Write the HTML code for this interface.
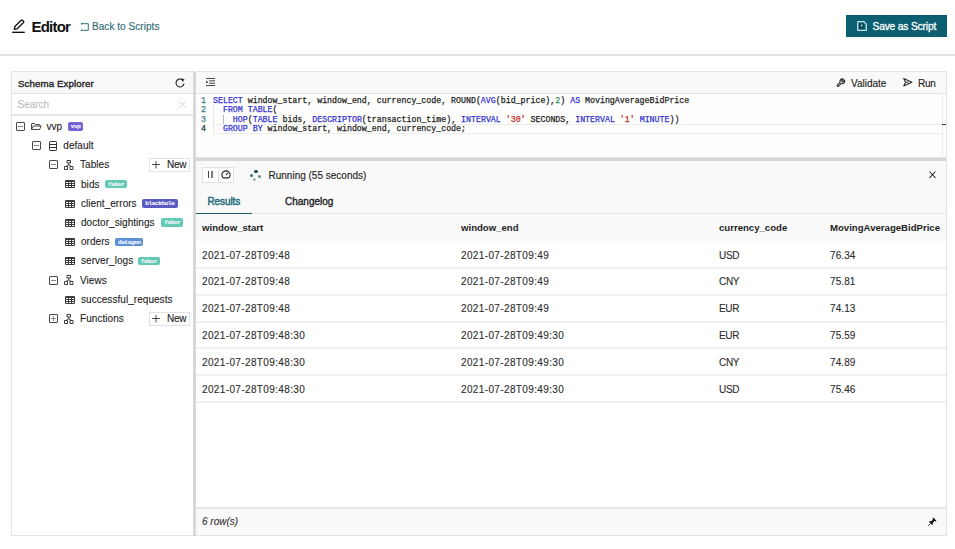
<!DOCTYPE html>
<html><head><meta charset="utf-8">
<style>
*{box-sizing:border-box;margin:0;padding:0}
html,body{width:955px;height:549px;overflow:hidden;background:#fff;font-family:"Liberation Sans",sans-serif;color:#222}
.a{position:absolute}
.t{position:absolute;white-space:nowrap;line-height:1;-webkit-text-stroke:0.12px currentColor}
svg{position:absolute;overflow:visible}
#hdrline{left:0;top:54px;width:955px;height:2px;background:#e4e4e4}
#save{left:846px;top:15px;width:101px;height:22px;background:#0c5e71}
#left{left:11px;top:71px;width:183px;height:465px;border:1px solid #e3e3e3;border-right:none;background:#fff}
#lhead{left:11px;top:71px;width:182px;height:23px;background:#f9f9f9;border-top:1px solid #e3e3e3;border-left:1px solid #e3e3e3;border-bottom:1px solid #e3e3e3}
#search{left:12px;top:114px;width:181px;height:2px;background:#e6e6e6}
#vsplit{left:193px;top:72px;width:3px;height:464px;background:#d8d8d8}
#right{left:196px;top:71px;width:751px;height:465px;border:1px solid #e3e3e3;border-left:none;background:#fff}
#rtool{left:196px;top:71px;width:751px;height:23px;background:#f9f9f9;border-top:1px solid #e3e3e3;border-right:1px solid #e3e3e3;border-bottom:1px solid #e3e3e3}
#editor{left:196px;top:94px;width:750px;height:64px;background:#fefefd}
#hsplit{left:196px;top:157px;width:750px;height:4px;background:#d6d6d6;border-top:1px solid #e4e4e4}
#rbar{left:196px;top:161px;width:750px;height:53px;background:#f9f9f9}
#tabline{left:196px;top:213px;width:750px;height:2px;background:#e8e8e8}
#thead{left:196px;top:214px;width:750px;height:27px;background:#f9f9f9}
#footer{left:196px;top:507px;width:750px;height:28px;background:#f9f9f9;border-top:2px solid #e8e8e8}
.code{position:absolute;left:213px;font-family:"Liberation Mono",monospace;font-size:8.27px;line-height:9.6px;white-space:pre;color:#1e1e1e;-webkit-text-stroke:0.25px currentColor}
.ln{position:absolute;left:201px;font-family:"Liberation Mono",monospace;font-size:8.27px;line-height:9.6px;color:#3f7f8a;-webkit-text-stroke:0.25px currentColor}
.kw{color:#3535d2}
.str{color:#c8282c}
.num{color:#2f8f6a}
.tr{font-size:10px;color:#222;-webkit-text-stroke:0.1px #222 !important;letter-spacing:0.05px}
.badge{position:absolute;height:8.5px;border-radius:2px;color:#f4f4ff;font-family:"Liberation Mono",monospace;font-weight:bold;font-size:6px;line-height:9.3px;letter-spacing:-0.32px;text-indent:0.3px;text-align:center;-webkit-text-stroke:0.15px #f4f4ff;overflow:hidden}
.th{font-size:9.6px;font-weight:bold;color:#1e1e1e;-webkit-text-stroke:0 !important}
.td{font-size:10px;color:#2e2e2e;letter-spacing:0.37px}
.rl{position:absolute;left:196px;width:750px;height:2px;background:#f1f1f1}
.box{position:absolute;width:9px;height:9px;border:1px solid #555;background:#fff}
.box:after{content:"";position:absolute;left:1.5px;top:3px;width:4px;height:1px;background:#555}
</style></head><body>
<!-- header -->
<svg style="left:8px;top:14px" width="24" height="24" viewBox="0 0 24 24"><path d="M6.3 15.4 L6.9 12.5 L13.2 6.2 Q13.8 5.6 14.4 6.2 L15.5 7.3 Q16.1 7.9 15.5 8.5 L9.2 14.8 Z" fill="none" stroke="#111" stroke-width="1.3" stroke-linejoin="round"/><path d="M4.1 18.3 H16.8" stroke="#111" stroke-width="1.35"/></svg>
<div class="t" style="left:31.5px;top:19px;font-size:15px;font-weight:bold;color:#111;letter-spacing:-0.8px;-webkit-text-stroke:0">Editor</div>
<svg style="left:81px;top:22.5px" width="8" height="8" viewBox="0 0 8 8"><path d="M0.5 0.7 H7.3 V7.3 H0.5 M0.5 0 V1.5 M0.5 6.5 V8" fill="none" stroke="#2a6e7e" stroke-width="1"/></svg>
<div class="t" style="left:92px;top:22px;font-size:10px;color:#2b6a78;letter-spacing:0.05px">Back to Scripts</div>
<div id="save" class="a"></div>
<svg style="left:857.3px;top:21px" width="10" height="10" viewBox="0 0 10 10"><path d="M0.7 0.7 H6.9 L9.3 3.1 V9.3 H0.7 Z" fill="none" stroke="#bfe3ea" stroke-width="1.3" stroke-linejoin="round"/><path d="M2.6 2.4 V6.6 H6.4 V2.4" fill="none" stroke="#0a3f4c" stroke-width="1.2"/><rect x="4" y="3.6" width="1.4" height="2" fill="#9cc6cf"/></svg>
<div class="t" style="left:872.5px;top:22px;font-size:10.2px;color:#fff;letter-spacing:-0.15px;-webkit-text-stroke:0.3px #fff">Save as Script</div>
<div id="hdrline" class="a"></div>

<!-- left panel -->
<div id="left" class="a"></div>
<div id="lhead" class="a"></div>
<div class="t" style="left:18px;top:79px;font-size:9.7px;color:#222;letter-spacing:0.1px;-webkit-text-stroke:0.35px #222">Schema Explorer</div>
<svg style="left:174.7px;top:77.8px" width="10" height="10" viewBox="0 0 10 10"><path d="M7.2 1.6 A4 4 0 1 0 9 5.6" fill="none" stroke="#222" stroke-width="1.15"/><path d="M6.3 0.2 L9.6 1.5 L7.4 4.1 Z" fill="#222"/></svg>
<div class="t" style="left:17.5px;top:99.5px;font-size:10px;color:#bdbdbd">Search</div>
<svg style="left:179px;top:101px" width="7" height="7" viewBox="0 0 7 7"><path d="M0.5 0.5 L6.5 6.5 M6.5 0.5 L0.5 6.5" stroke="#c8c8c8" stroke-width="0.9"/></svg>
<div id="search" class="a"></div>

<div id="vsplit" class="a"></div>

<!-- right panel -->
<div id="right" class="a"></div>
<div id="rtool" class="a"></div>
<svg style="left:205.5px;top:78px" width="9" height="8" viewBox="0 0 9 8"><path d="M0 0.5 H9 M3.2 2.8 H9 M3.2 5.2 H9 M0 7.5 H9" stroke="#333" stroke-width="0.9"/><path d="M0.2 2.4 L2.2 4 L0.2 5.6 Z" fill="#333"/></svg>
<svg style="left:835.5px;top:78px" width="9.5" height="9.5" viewBox="0 0 24 24"><path d="M14.7 6.3a1 1 0 0 0 0 1.4l1.6 1.6a1 1 0 0 0 1.4 0l3.77-3.77a6 6 0 0 1-7.94 7.94l-6.91 6.91a2.12 2.12 0 0 1-3-3l6.91-6.91a6 6 0 0 1 7.94-7.94l-3.76 3.76z" fill="none" stroke="#2a2a2a" stroke-width="2.9" stroke-linejoin="round"/></svg>
<div class="t" style="left:851px;top:78.5px;font-size:10px;color:#222">Validate</div>
<svg style="left:902.5px;top:78.3px" width="9.5" height="8.5" viewBox="0 0 9.5 8.5"><path d="M0.7 0.6 L8.9 4.25 L0.7 7.9 L2.6 4.25 Z M2.6 4.25 H5.5" fill="none" stroke="#2a2a2a" stroke-width="1.1" stroke-linejoin="round"/></svg>
<div class="t" style="left:918px;top:78.5px;font-size:10px;color:#222;letter-spacing:-0.3px">Run</div>

<div id="editor" class="a"></div>
<!-- current line highlight -->
<div class="a" style="left:213px;top:124px;width:729px;height:10px;border-top:1px solid #ededed;border-bottom:1px solid #ededed"></div>
<div class="a" style="left:942px;top:94px;width:1px;height:64px;background:#eeeeea"></div>
<div class="a" style="left:942px;top:123.6px;width:4px;height:1.6px;background:#333"></div>
<div class="a" style="left:213px;top:105px;width:1px;height:29px;background:#e8e8e8"></div>
<div class="a" style="left:223px;top:115px;width:1px;height:9px;background:#b8b8b8"></div>
<div class="ln" style="top:95.7px">1<br>2<br>3<br><span style="color:#23343a">4</span></div>
<div class="code" style="top:95.7px"><span class="kw">SELECT</span> window_start, window_end, currency_code, ROUND(<span class="kw">AVG</span>(bid_price),<span class="num">2</span>) <span class="kw">AS</span> MovingAverageBidPrice
  <span class="kw">FROM</span> <span class="kw">TABLE</span>(
    <span class="kw">HOP</span>(<span class="kw">TABLE</span> bids, <span class="kw">DESCRIPTOR</span>(transaction_time), <span class="kw">INTERVAL</span> <span class="str">'30'</span> SECONDS, <span class="kw">INTERVAL</span> <span class="str">'1'</span> <span class="kw">MINUTE</span>))
  <span class="kw">GROUP</span> <span class="kw">BY</span> window_start, window_end, currency_code;</div>

<div id="hsplit" class="a"></div>
<div id="rbar" class="a"></div>
<!-- button group -->
<div class="a" style="left:202px;top:166.5px;width:32px;height:16px;background:#fff;border:1px solid #e2e2e2"></div>
<div class="a" style="left:218px;top:167px;width:1px;height:15px;background:#e2e2e2"></div>
<div class="a" style="left:207.7px;top:170.8px;width:1.3px;height:7.3px;background:#444"></div>
<div class="a" style="left:211.3px;top:170.8px;width:1.3px;height:7.3px;background:#777"></div>
<svg style="left:221px;top:170.3px" width="10" height="9" viewBox="0 0 10 9"><path d="M2.2 7.9 A4.1 4.1 0 1 1 7.8 7.9 Z" fill="none" stroke="#2a2a2a" stroke-width="1.15"/><path d="M5 4.9 L7 2.9" stroke="#2a2a2a" stroke-width="1.1"/><path d="M5 0.6 V1.6" stroke="#333" stroke-width="0.9"/></svg>
<!-- spinner -->
<div class="a" style="left:254.4px;top:170.3px;width:3.2px;height:3.2px;border-radius:50%;background:#1f4a50"></div>
<div class="a" style="left:249.9px;top:173.8px;width:3.2px;height:3.2px;border-radius:50%;background:#3e6a70"></div>
<div class="a" style="left:257.7px;top:174.6px;width:3.2px;height:3.2px;border-radius:50%;background:#6a8a8e"></div>
<div class="a" style="left:253.2px;top:178.2px;width:3.2px;height:3.2px;border-radius:50%;background:#a0b4b6"></div>
<div class="t" style="left:268.5px;top:171px;font-size:10px;color:#222">Running (55 seconds)</div>
<svg style="left:929px;top:170.7px" width="7" height="7.3" viewBox="0 0 7 7.3"><path d="M0.5 0.5 L6.5 6.8 M6.5 0.5 L0.5 6.8" stroke="#2a2a2a" stroke-width="1.05"/></svg>
<!-- tabs -->
<div class="t" style="left:207.5px;top:196.5px;font-size:10px;color:#246b7c;letter-spacing:-0.1px;-webkit-text-stroke:0.45px #246b7c">Results</div>
<div class="t" style="left:285px;top:196.5px;font-size:10px;color:#222;letter-spacing:0px;-webkit-text-stroke:0.35px #222">Changelog</div>
<div id="tabline" class="a"></div>
<div class="a" style="left:196px;top:212.5px;width:56px;height:2px;background:#1d5f70"></div>

<!-- table -->
<div id="thead" class="a"></div>
<div class="t th" style="left:202px;top:223px">window_start</div>
<div class="t th" style="left:461px;top:223px">window_end</div>
<div class="t th" style="left:719px;top:223px">currency_code</div>
<div class="t th" style="left:830px;top:223px">MovingAverageBidPrice</div>

<div class="t td" style="left:202px;top:251px">2021-07-28T09:48</div>
<div class="t td" style="left:461px;top:251px">2021-07-28T09:49</div>
<div class="t td" style="left:719px;top:251px;letter-spacing:-0.3px">USD</div>
<div class="t td" style="left:830px;top:251px;letter-spacing:0.1px">76.34</div>
<div class="rl" style="top:267.0px"></div>
<div class="t td" style="left:202px;top:277px">2021-07-28T09:48</div>
<div class="t td" style="left:461px;top:277px">2021-07-28T09:49</div>
<div class="t td" style="left:719px;top:277px;letter-spacing:-0.3px">CNY</div>
<div class="t td" style="left:830px;top:277px;letter-spacing:0.1px">75.81</div>
<div class="rl" style="top:293.8px"></div>
<div class="t td" style="left:202px;top:304px">2021-07-28T09:48</div>
<div class="t td" style="left:461px;top:304px">2021-07-28T09:49</div>
<div class="t td" style="left:719px;top:304px;letter-spacing:-0.3px">EUR</div>
<div class="t td" style="left:830px;top:304px;letter-spacing:0.1px">74.13</div>
<div class="rl" style="top:320.6px"></div>
<div class="t td" style="left:202px;top:331px">2021-07-28T09:48:30</div>
<div class="t td" style="left:461px;top:331px">2021-07-28T09:49:30</div>
<div class="t td" style="left:719px;top:331px;letter-spacing:-0.3px">EUR</div>
<div class="t td" style="left:830px;top:331px;letter-spacing:0.1px">75.59</div>
<div class="rl" style="top:347.4px"></div>
<div class="t td" style="left:202px;top:358px">2021-07-28T09:48:30</div>
<div class="t td" style="left:461px;top:358px">2021-07-28T09:49:30</div>
<div class="t td" style="left:719px;top:358px;letter-spacing:-0.3px">CNY</div>
<div class="t td" style="left:830px;top:358px;letter-spacing:0.1px">74.89</div>
<div class="rl" style="top:374.2px"></div>
<div class="t td" style="left:202px;top:385px">2021-07-28T09:48:30</div>
<div class="t td" style="left:461px;top:385px">2021-07-28T09:49:30</div>
<div class="t td" style="left:719px;top:385px;letter-spacing:-0.3px">USD</div>
<div class="t td" style="left:830px;top:385px;letter-spacing:0.1px">75.46</div>
<div class="rl" style="top:401.0px"></div>

<div id="footer" class="a"></div>
<div class="t" style="left:202px;top:517px;font-size:10px;font-style:italic;color:#333">6 row(s)</div>
<svg style="left:928px;top:517px" width="9" height="9" viewBox="0 0 9 9"><path d="M5.2 0.5 L8.5 3.8 L7.6 4.4 L6.4 4.1 L4.8 5.7 L4.9 7.2 L4.2 7.9 L1.1 4.8 L1.8 4.1 L3.3 4.2 L4.9 2.6 L4.6 1.4 Z" fill="#111"/><path d="M2.6 6.4 L0.4 8.6" stroke="#111" stroke-width="1"/></svg>

<!-- tree -->
<div class="a" style="left:16px;top:122px;width:9px;height:9px;border:1px solid #4a4a4a;border-radius:1px;background:#fff"></div>
<div class="a" style="left:18px;top:126px;width:5px;height:1px;background:#888"></div>
<svg style="left:31px;top:123.20px" width="11" height="7" viewBox="0 0 11 7"><path d="M0.5 6.5 V1 Q0.5 0.5 1 0.5 H3.6 L4.6 1.6 H8.4 Q8.9 1.6 8.9 2.1 V3 M0.5 6.5 L2.2 3 H10.2 L8.6 6.5 Z" fill="none" stroke="#333" stroke-width="0.9" stroke-linejoin="round"/></svg>
<div class="t tr" style="left:46.5px;top:122px">vvp</div>
<div class="badge" style="left:67.7px;top:122.30px;width:15.6px;background:#7462d6">vvp</div>
<div class="a" style="left:32px;top:141px;width:9px;height:9px;border:1px solid #4a4a4a;border-radius:1px;background:#fff"></div>
<div class="a" style="left:34px;top:145px;width:5px;height:1px;background:#888"></div>
<svg style="left:49px;top:141px" width="8" height="10" viewBox="0 0 8 10"><path d="M1.2 0.5 H6.8 Q7.5 0.5 7.5 1.2 V8.8 Q7.5 9.5 6.8 9.5 H1.2 Q0.5 9.5 0.5 8.8 V1.2 Q0.5 0.5 1.2 0.5 Z M0.5 3.5 H7.5 M0.5 6.5 H7.5" fill="none" stroke="#333" stroke-width="1"/></svg>
<div class="t tr" style="left:63.3px;top:141px">default</div>
<div class="a" style="left:49px;top:160px;width:9px;height:9px;border:1px solid #4a4a4a;border-radius:1px;background:#fff"></div>
<div class="a" style="left:51px;top:164px;width:5px;height:1px;background:#888"></div>
<svg style="left:64px;top:160px" width="10" height="10" viewBox="0 0 10 10"><path d="M3 0.5 H6.5 V3 H3 Z M0.5 6.5 H3.5 V9.5 H0.5 Z M6 6.5 H9 V9.5 H6 Z M4.75 3 V4.8 L2 6.5 M4.75 4.8 L7.5 6.5" fill="none" stroke="#333" stroke-width="0.95"/></svg>
<div class="t tr" style="left:80px;top:160px">Tables</div>
<div class="a" style="left:148.5px;top:158.30px;width:41.5px;height:13.8px;border:1px solid #e3e3e3;background:#fff"></div>
<svg style="left:152px;top:161.30px" width="8" height="8" viewBox="0 0 8 8"><path d="M4 0 V7.5 M0 3.5 H8" stroke="#222" stroke-width="0.8"/></svg>
<div class="t tr" style="left:167px;top:160px;letter-spacing:-0.3px">New</div>
<svg style="left:65px;top:180px" width="10" height="8" viewBox="0 0 10 8"><path d="M0.5 0.5 H9.5 V7.5 H0.5 Z M0.5 1.5 H9.5 M0.5 3.5 H9.5 M0.5 5.5 H9.5 M3.5 0.5 V7.5 M6.5 0.5 V7.5" fill="none" stroke="#333" stroke-width="0.95"/></svg>
<div class="t tr" style="left:81px;top:180px">bids</div>
<div class="badge" style="left:105.2px;top:179.90px;width:21.6px;background:#62c9b4">faker</div>
<svg style="left:65px;top:200px" width="10" height="8" viewBox="0 0 10 8"><path d="M0.5 0.5 H9.5 V7.5 H0.5 Z M0.5 1.5 H9.5 M0.5 3.5 H9.5 M0.5 5.5 H9.5 M3.5 0.5 V7.5 M6.5 0.5 V7.5" fill="none" stroke="#333" stroke-width="0.95"/></svg>
<div class="t tr" style="left:81px;top:199px">client_errors</div>
<div class="badge" style="left:142px;top:199.10px;width:35.5px;background:#5a5cc4">blackhole</div>
<svg style="left:65px;top:219px" width="10" height="8" viewBox="0 0 10 8"><path d="M0.5 0.5 H9.5 V7.5 H0.5 Z M0.5 1.5 H9.5 M0.5 3.5 H9.5 M0.5 5.5 H9.5 M3.5 0.5 V7.5 M6.5 0.5 V7.5" fill="none" stroke="#333" stroke-width="0.95"/></svg>
<div class="t tr" style="left:81px;top:218px">doctor_sightings</div>
<div class="badge" style="left:161.4px;top:218.30px;width:21.6px;background:#62c9b4">faker</div>
<svg style="left:65px;top:238px" width="10" height="8" viewBox="0 0 10 8"><path d="M0.5 0.5 H9.5 V7.5 H0.5 Z M0.5 1.5 H9.5 M0.5 3.5 H9.5 M0.5 5.5 H9.5 M3.5 0.5 V7.5 M6.5 0.5 V7.5" fill="none" stroke="#333" stroke-width="0.95"/></svg>
<div class="t tr" style="left:81px;top:237px">orders</div>
<div class="badge" style="left:115.2px;top:237.50px;width:28.1px;background:#5b90d4">datagen</div>
<svg style="left:65px;top:257px" width="10" height="8" viewBox="0 0 10 8"><path d="M0.5 0.5 H9.5 V7.5 H0.5 Z M0.5 1.5 H9.5 M0.5 3.5 H9.5 M0.5 5.5 H9.5 M3.5 0.5 V7.5 M6.5 0.5 V7.5" fill="none" stroke="#333" stroke-width="0.95"/></svg>
<div class="t tr" style="left:81px;top:256px">server_logs</div>
<div class="badge" style="left:138px;top:256.70px;width:21.7px;background:#62c9b4">faker</div>
<div class="a" style="left:49px;top:276px;width:9px;height:9px;border:1px solid #4a4a4a;border-radius:1px;background:#fff"></div>
<div class="a" style="left:51px;top:280px;width:5px;height:1px;background:#888"></div>
<svg style="left:64px;top:275px" width="10" height="10" viewBox="0 0 10 10"><path d="M3 0.5 H6.5 V3 H3 Z M0.5 6.5 H3.5 V9.5 H0.5 Z M6 6.5 H9 V9.5 H6 Z M4.75 3 V4.8 L2 6.5 M4.75 4.8 L7.5 6.5" fill="none" stroke="#333" stroke-width="0.95"/></svg>
<div class="t tr" style="left:80px;top:276px">Views</div>
<svg style="left:65px;top:296px" width="10" height="8" viewBox="0 0 10 8"><path d="M0.5 0.5 H9.5 V7.5 H0.5 Z M0.5 1.5 H9.5 M0.5 3.5 H9.5 M0.5 5.5 H9.5 M3.5 0.5 V7.5 M6.5 0.5 V7.5" fill="none" stroke="#333" stroke-width="0.95"/></svg>
<div class="t tr" style="left:81px;top:295px">successful_requests</div>
<div class="a" style="left:49px;top:314px;width:9px;height:9px;border:1px solid #4a4a4a;border-radius:1px;background:#fff"></div>
<div class="a" style="left:51px;top:318px;width:5px;height:1px;background:#888"></div>
<div class="a" style="left:53px;top:316px;width:1px;height:5px;background:#888"></div>
<svg style="left:64px;top:314px" width="10" height="10" viewBox="0 0 10 10"><path d="M3 0.5 H6.5 V3 H3 Z M0.5 6.5 H3.5 V9.5 H0.5 Z M6 6.5 H9 V9.5 H6 Z M4.75 3 V4.8 L2 6.5 M4.75 4.8 L7.5 6.5" fill="none" stroke="#333" stroke-width="0.95"/></svg>
<div class="t tr" style="left:80px;top:314px">Functions</div>
<div class="a" style="left:148.5px;top:311.90px;width:41.5px;height:13.8px;border:1px solid #e3e3e3;background:#fff"></div>
<svg style="left:152px;top:314.90px" width="8" height="8" viewBox="0 0 8 8"><path d="M4 0 V7.5 M0 3.5 H8" stroke="#222" stroke-width="0.8"/></svg>
<div class="t tr" style="left:167px;top:314px;letter-spacing:-0.3px">New</div>
</body></html>
